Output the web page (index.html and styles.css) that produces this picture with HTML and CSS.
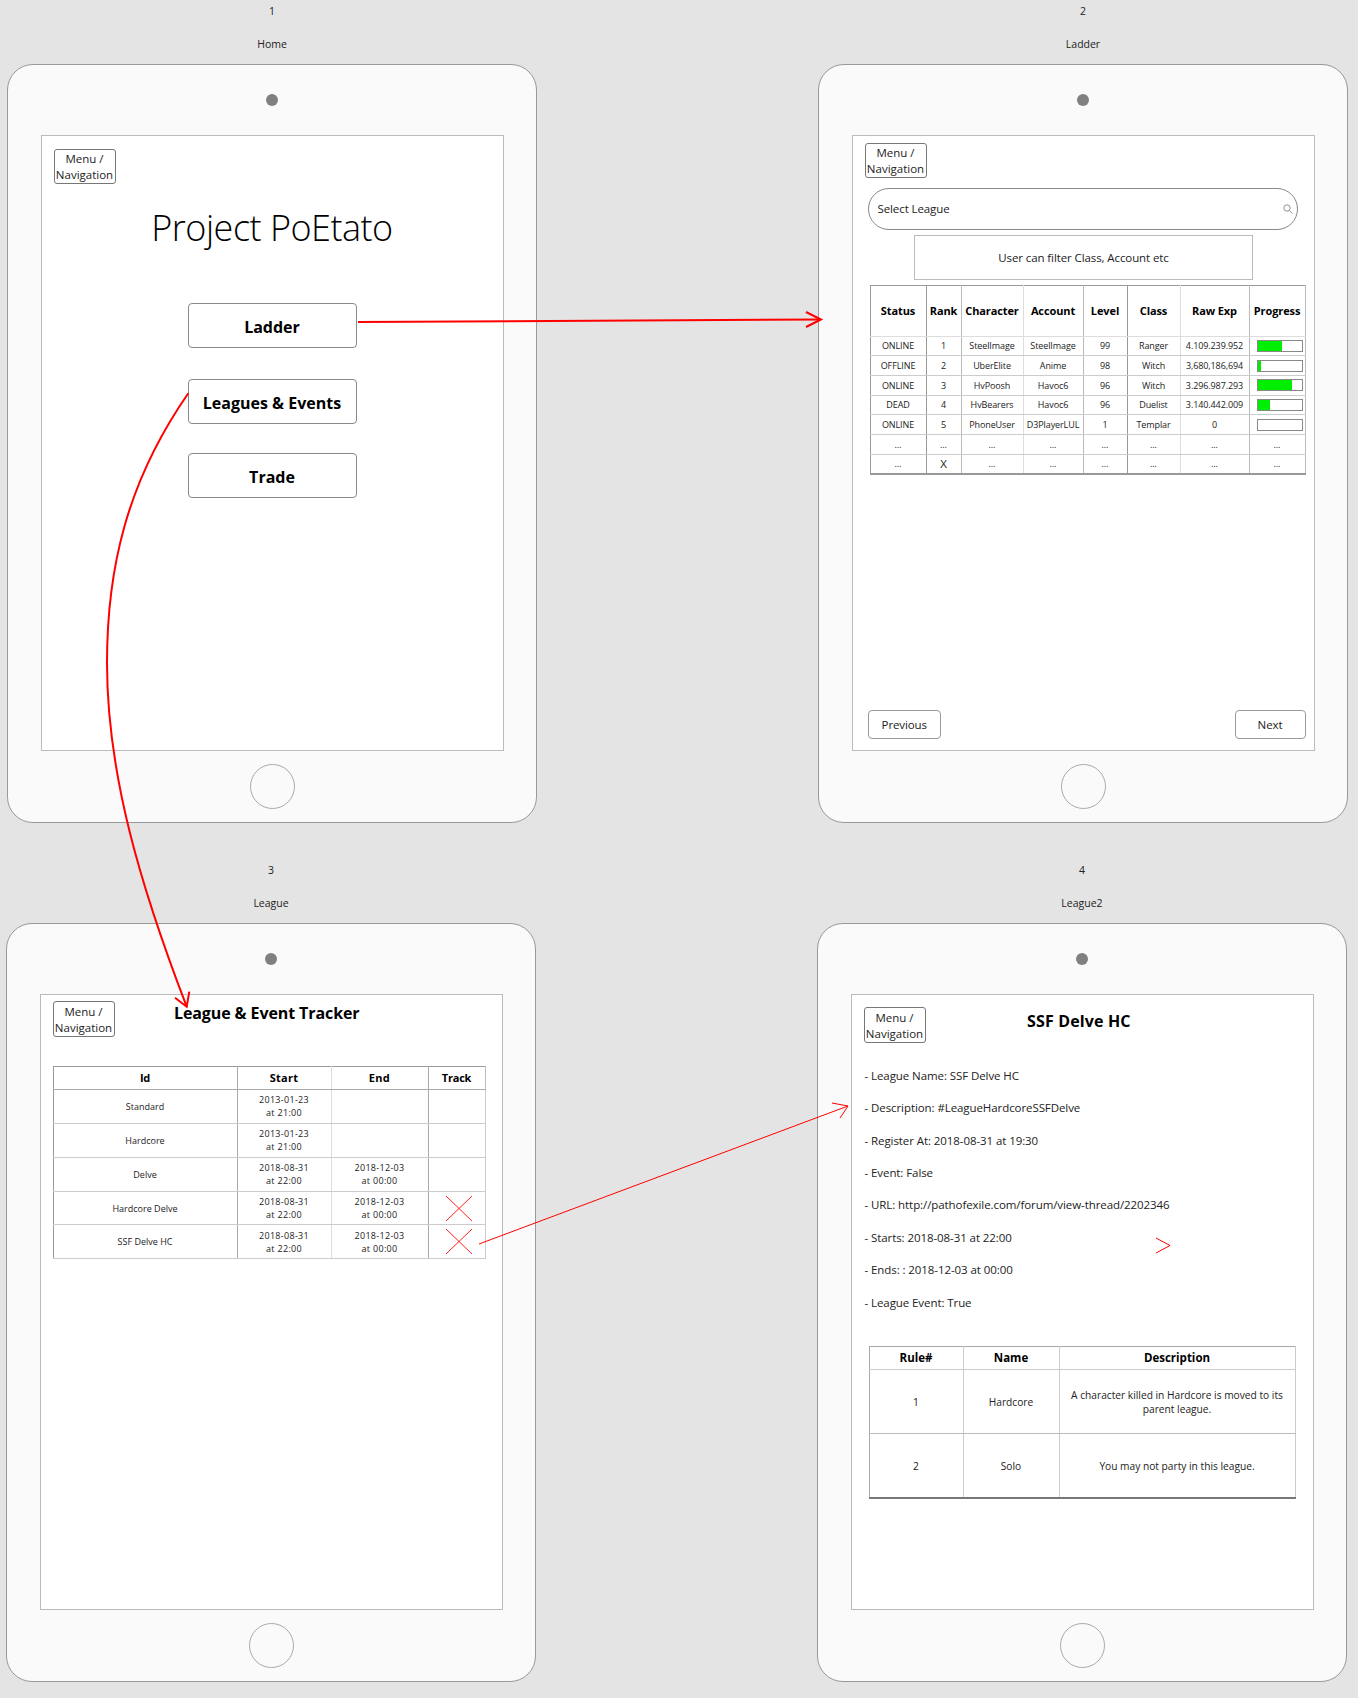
FILE: index.html
```html
<!DOCTYPE html>
<html lang="en">

<head>
    <meta charset="UTF-8">
    <meta name="viewport" content="width=device-width, initial-scale=1.0">
    <title>Project PoEtato wireframes</title>
    <link rel="stylesheet" href="styles.css">
</head>

<body>
    <div class="canvas">

        <!-- 1: Home -->
        <section class="frame frame-home">
            <div class="frame-num">1</div>
            <div class="frame-name">Home</div>
            <div class="device">
                <div class="camera"></div>
                <div class="screen screen-home">
                    <button class="menu-btn">Menu /<br>Navigation</button>
                    <h1 class="app-title">Project PoEtato</h1>
                    <div class="home-nav">
                        <button class="home-btn">Ladder</button>
                        <button class="home-btn">Leagues &amp; Events</button>
                        <button class="home-btn">Trade</button>
                    </div>
                </div>
                <div class="home-key"></div>
            </div>
        </section>

        <!-- 2: Ladder -->
        <section class="frame frame-ladder">
            <div class="frame-num">2</div>
            <div class="frame-name">Ladder</div>
            <div class="device">
                <div class="camera"></div>
                <div class="screen screen-ladder">
                    <button class="menu-btn">Menu /<br>Navigation</button>
                    <div class="search">
                        <span>Select League</span>
                        <svg class="search-icon" width="10" height="10" viewBox="0 0 10 10">
                            <circle cx="4" cy="4" r="3.2"></circle>
                            <path d="M6.4 6.4L9.4 9.6"></path>
                        </svg>
                    </div>
                    <div class="filter-box">User can filter Class, Account etc</div>
                    <table class="ladder-table">
                        <thead>
                            <tr>
                                <th>Status</th>
                                <th>Rank</th>
                                <th>Character</th>
                                <th>Account</th>
                                <th>Level</th>
                                <th>Class</th>
                                <th>Raw Exp</th>
                                <th>Progress</th>
                            </tr>
                        </thead>
                        <tbody>
                            <tr>
                                <td>ONLINE</td>
                                <td>1</td>
                                <td>SteelImage</td>
                                <td>SteelImage</td>
                                <td>99</td>
                                <td>Ranger</td>
                                <td>4.109.239.952</td>
                                <td><div class="bar"><div class="bar-fill" style="width: 55%"></div></div></td>
                            </tr>
                            <tr>
                                <td>OFFLINE</td>
                                <td>2</td>
                                <td>UberElite</td>
                                <td>Anime</td>
                                <td>98</td>
                                <td>Witch</td>
                                <td>3,680,186,694</td>
                                <td><div class="bar"><div class="bar-fill" style="width: 8%"></div></div></td>
                            </tr>
                            <tr>
                                <td>ONLINE</td>
                                <td>3</td>
                                <td>HvPoosh</td>
                                <td>Havoc6</td>
                                <td>96</td>
                                <td>Witch</td>
                                <td>3.296.987.293</td>
                                <td><div class="bar"><div class="bar-fill" style="width: 79%"></div></div></td>
                            </tr>
                            <tr>
                                <td>DEAD</td>
                                <td>4</td>
                                <td>HvBearers</td>
                                <td>Havoc6</td>
                                <td>96</td>
                                <td>Duelist</td>
                                <td>3.140.442.009</td>
                                <td><div class="bar"><div class="bar-fill" style="width: 29%"></div></div></td>
                            </tr>
                            <tr>
                                <td>ONLINE</td>
                                <td>5</td>
                                <td>PhoneUser</td>
                                <td>D3PlayerLUL</td>
                                <td>1</td>
                                <td>Templar</td>
                                <td>0</td>
                                <td><div class="bar"></div></td>
                            </tr>
                            <tr>
                                <td>...</td>
                                <td>...</td>
                                <td>...</td>
                                <td>...</td>
                                <td>...</td>
                                <td>...</td>
                                <td>...</td>
                                <td>...</td>
                            </tr>
                            <tr>
                                <td>...</td>
                                <td class="rank-x">X</td>
                                <td>...</td>
                                <td>...</td>
                                <td>...</td>
                                <td>...</td>
                                <td>...</td>
                                <td>...</td>
                            </tr>
                        </tbody>
                    </table>
                    <div class="pager">
                        <button class="pager-btn">Previous</button>
                        <button class="pager-btn">Next</button>
                    </div>
                </div>
                <div class="home-key"></div>
            </div>
        </section>

        <!-- 3: League -->
        <section class="frame frame-league">
            <div class="frame-num">3</div>
            <div class="frame-name">League</div>
            <div class="device">
                <div class="camera"></div>
                <div class="screen screen-league">
                    <div class="screen-head">
                        <button class="menu-btn">Menu /<br>Navigation</button>
                        <h2 class="screen-title">League &amp; Event Tracker</h2>
                    </div>
                    <table class="league-table">
                        <thead>
                            <tr>
                                <th>Id</th>
                                <th>Start</th>
                                <th>End</th>
                                <th>Track</th>
                            </tr>
                        </thead>
                        <tbody>
                            <tr>
                                <td>Standard</td>
                                <td>2013-01-23<br>at 21:00</td>
                                <td></td>
                                <td></td>
                            </tr>
                            <tr>
                                <td>Hardcore</td>
                                <td>2013-01-23<br>at 21:00</td>
                                <td></td>
                                <td></td>
                            </tr>
                            <tr>
                                <td>Delve</td>
                                <td>2018-08-31<br>at 22:00</td>
                                <td>2018-12-03<br>at 00:00</td>
                                <td></td>
                            </tr>
                            <tr>
                                <td>Hardcore Delve</td>
                                <td>2018-08-31<br>at 22:00</td>
                                <td>2018-12-03<br>at 00:00</td>
                                <td>
                                    <svg class="track-x" width="26" height="25" viewBox="0 0 26 25">
                                        <path d="M0 0L26 25M26 0L0 25"></path>
                                    </svg>
                                </td>
                            </tr>
                            <tr>
                                <td>SSF Delve HC</td>
                                <td>2018-08-31<br>at 22:00</td>
                                <td>2018-12-03<br>at 00:00</td>
                                <td>
                                    <svg class="track-x" width="26" height="25" viewBox="0 0 26 25">
                                        <path d="M0 0L26 25M26 0L0 25"></path>
                                    </svg>
                                </td>
                            </tr>
                        </tbody>
                    </table>
                </div>
                <div class="home-key"></div>
            </div>
        </section>

        <!-- 4: League2 -->
        <section class="frame frame-league2">
            <div class="frame-num">4</div>
            <div class="frame-name">League2</div>
            <div class="device">
                <div class="camera"></div>
                <div class="screen screen-league2">
                    <div class="screen-head">
                        <button class="menu-btn">Menu /<br>Navigation</button>
                        <h2 class="screen-title">SSF Delve HC</h2>
                    </div>
                    <ul class="league-info">
                        <li>- League Name: SSF Delve HC</li>
                        <li>- Description: #LeagueHardcoreSSFDelve</li>
                        <li>- Register At: 2018-08-31 at 19:30</li>
                        <li>- Event: False</li>
                        <li>- URL: http://pathofexile.com/forum/view-thread/2202346</li>
                        <li>- Starts: 2018-08-31 at 22:00</li>
                        <li>- Ends: : 2018-12-03 at 00:00</li>
                        <li>- League Event: True</li>
                    </ul>
                    <table class="rules-table">
                        <thead>
                            <tr>
                                <th>Rule#</th>
                                <th>Name</th>
                                <th>Description</th>
                            </tr>
                        </thead>
                        <tbody>
                            <tr>
                                <td>1</td>
                                <td>Hardcore</td>
                                <td>A character killed in Hardcore is moved to its parent league.</td>
                            </tr>
                            <tr>
                                <td>2</td>
                                <td>Solo</td>
                                <td>You may not party in this league.</td>
                            </tr>
                        </tbody>
                    </table>
                </div>
                <div class="home-key"></div>
            </div>
        </section>

        <!-- Prototype links drawn over the frames -->
        <svg class="links" width="1358" height="1698" viewBox="0 0 1358 1698">
            <path class="link-thick" d="M358 322L821 319.5"></path>
            <path class="link-thick" d="M806 312L821 319.5L806 327"></path>
            <path class="link-thick" d="M188.300 393.300C126 483 107 570 107 663C107 773 140 885 186.700 1006.700"></path>
            <path class="link-thick" d="M175 997.700L186.700 1006.700L189.300 991.700"></path>
            <path class="link-thin" d="M479 1244L848 1106"></path>
            <path class="link-thin" d="M832 1103L848 1106L840 1118"></path>
            <path class="link-thin" d="M1156 1238L1170 1245.500L1156 1253"></path>
        </svg>
    </div>
</body>

</html>
```

FILE: styles.css
```css
/* Wireframe board */
* {
    box-sizing: border-box;
}

body {
    margin: 0;
    background-color: #e4e4e4;
    font-family: "Open Sans", "Liberation Sans", sans-serif;
    color: #222;
}

button {
    font-family: inherit;
    color: inherit;
    background-color: #fff;
    padding: 0;
}

.canvas {
    position: relative;
    width: 1358px;
    height: 1698px;
    overflow: hidden;
}

.links {
    position: absolute;
    left: 0;
    top: 0;
    pointer-events: none;
}

.links path {
    fill: none;
    stroke: #f00;
}

.link-thick {
    stroke-width: 2;
}

.link-thin {
    stroke-width: 1;
}

/* Frames sit at free places on the board */
.frame {
    position: absolute;
    width: 530px;
}

.frame-home {
    left: 7px;
    top: 0;
}

.frame-ladder {
    left: 818px;
    top: 0;
}

.frame-league {
    left: 6px;
    top: 859px;
}

.frame-league2 {
    left: 817px;
    top: 859px;
}

.frame-num,
.frame-name {
    text-align: center;
    font-size: 10.5px;
    height: 14px;
    line-height: 14px;
}

.frame-num {
    margin-top: 4px;
}

.frame-name {
    margin-top: 19px;
    margin-bottom: 13px;
}

.device {
    display: flex;
    flex-direction: column;
    align-items: center;
    height: 759px;
    padding-top: 29px;
    background-color: #fafafa;
    border: 1px solid #999;
    border-radius: 26px;
}

.camera {
    width: 12px;
    height: 12px;
    border-radius: 50%;
    background-color: #808080;
}

.home-key {
    width: 45px;
    height: 45px;
    margin-top: 13px;
    border: 1px solid #aaa;
    border-radius: 50%;
}

.screen {
    width: 463px;
    height: 616px;
    margin-top: 29px;
    background-color: #fff;
    border: 1px solid #bbb;
}

.menu-btn {
    display: block;
    flex-shrink: 0;
    width: 62px;
    height: 35.500px;
    padding-top: 1px;
    border: 1px solid #777;
    border-radius: 3px;
    font-size: 11.5px;
    line-height: 16px;
}

/* Home */
.screen-home {
    padding: 12.500px 0 0 12px;
}

.app-title {
    margin: 18.500px 12px 0 0;
    font-size: 36px;
    font-weight: 300;
    line-height: 50px;
    text-align: center;
    color: #000;
    letter-spacing: -0.5px;
}

.home-nav {
    display: flex;
    flex-direction: column;
    align-items: center;
    gap: 31.500px;
    margin: 50.500px 12px 0 0;
}

.home-btn {
    width: 169px;
    height: 44.500px;
    padding-top: 3px;
    border: 1px solid #888;
    border-radius: 4px;
    font-size: 16px;
    font-weight: 700;
    color: #000;
}

.home-btn:last-child {
    margin-top: -2px;
}

/* Ladder */
.screen-ladder {
    display: flex;
    flex-direction: column;
    padding: 6.500px 7px 11px 12px;
}

.search {
    display: flex;
    align-items: center;
    justify-content: space-between;
    width: 430px;
    height: 42.500px;
    margin: 9.500px 0 0 3.500px;
    padding: 0 4px 0 8.500px;
    border: 1px solid #888;
    border-radius: 21px;
    font-size: 11.500px;
    letter-spacing: -0.1px;
}

.search-icon {
    fill: none;
    stroke: #777;
    stroke-width: 0.8;
}

.filter-box {
    display: flex;
    align-items: center;
    justify-content: center;
    width: 339px;
    height: 45px;
    margin: 5px 0 0 49px;
    padding-left: 1px;
    border: 1px solid #bbb;
    font-size: 11.500px;
    letter-spacing: -0.1px;
}

.ladder-table,
.league-table,
.rules-table {
    border-collapse: collapse;
    table-layout: fixed;
    text-align: center;
}

th {
    color: #000;
    font-weight: 700;
    padding: 0;
}

td {
    padding: 0;
}

.ladder-table {
    width: 436px;
    margin: 4.500px 0 0 5px;
    border: 1px solid #999;
    border-bottom-width: 2px;
    font-size: 9px;
}

.ladder-table th {
    height: 51px;
    font-size: 11px;
    letter-spacing: -0.1px;
    border-bottom: 1px solid #ddd;
    border-right: 1px solid #bbb;
}

.ladder-table td {
    height: 19.700px;
    border-bottom: 1px solid #ccc;
    border-right: 1px solid #bbb;
    white-space: nowrap;
    letter-spacing: -0.1px;
}

.ladder-table th:nth-child(1),
.ladder-table td:nth-child(1) {
    width: 56px;
    border-right-color: #999;
}

.ladder-table th:nth-child(2),
.ladder-table td:nth-child(2) {
    width: 35px;
}

.ladder-table th:nth-child(3),
.ladder-table td:nth-child(3) {
    width: 62px;
    border-right-color: #ddd;
}

.ladder-table th:nth-child(4),
.ladder-table td:nth-child(4) {
    width: 60px;
}

.ladder-table th:nth-child(5),
.ladder-table td:nth-child(5) {
    width: 44px;
    border-right-color: #999;
}

.ladder-table th:nth-child(6),
.ladder-table td:nth-child(6) {
    width: 53px;
    border-right-color: #ddd;
}

.ladder-table th:nth-child(7),
.ladder-table td:nth-child(7) {
    width: 69px;
}

.ladder-table td.rank-x {
    font-size: 11.500px;
}

.bar {
    width: 46px;
    height: 12px;
    margin-left: 7px;
    background-color: #fff;
    border: 1px solid #888;
}

.bar-fill {
    height: 100%;
    background-color: #00ee00;
}

.pager {
    display: flex;
    justify-content: space-between;
    margin-top: auto;
    padding: 0 1px 0 3.500px;
}

.pager-btn {
    width: 72.500px;
    height: 29.500px;
    border: 1px solid #999;
    border-radius: 4px;
    font-size: 11.500px;
    letter-spacing: -0.1px;
}

.pager-btn:last-child {
    width: 71px;
}

/* League list */
.screen-head {
    display: flex;
    align-items: flex-start;
}

.screen-title {
    margin: 0;
    font-size: 16px;
    font-weight: 700;
    color: #000;
    white-space: nowrap;
}

.screen-league {
    padding: 6.400px 0 0 12px;
}

.screen-league .screen-title {
    margin: 1px 0 0 59.500px;
    letter-spacing: -0.1px;
}

.league-table {
    width: 433px;
    margin-top: 29px;
    border: 1px solid #999;
    font-size: 9px;
    line-height: 13px;
}

.league-table th {
    height: 23px;
    font-size: 11px;
    letter-spacing: -0.2px;
    border-bottom: 1px solid #aaa;
    border-right: 1px solid #bbb;
}

.league-table td {
    height: 33.900px;
    border-bottom: 1px solid #ccc;
    border-right: 1px solid #ccc;
    vertical-align: middle;
}

.league-table th:nth-child(1),
.league-table td:nth-child(1) {
    width: 184px;
    border-right-color: #aaa;
}

.league-table th:nth-child(2),
.league-table td:nth-child(2) {
    width: 94px;
    border-right-color: #ddd;
    letter-spacing: 0.3px;
}

.league-table th:nth-child(3),
.league-table td:nth-child(3) {
    width: 97px;
    border-right-color: #aaa;
    letter-spacing: 0.3px;
}

.track-x {
    display: block;
    margin-left: 17px;
    fill: none;
    stroke: #f22;
    stroke-width: 1;
}

/* League detail */
.screen-league2 {
    padding: 12.400px 0 0 12px;
}

.screen-league2 .screen-title {
    margin: 3px 0 0 101.500px;
    letter-spacing: 0.15px;
}

.league-info {
    list-style: none;
    margin: 0;
    padding: 17px 0 0 1px;
    font-size: 11.500px;
    letter-spacing: -0.08px;
}

.league-info li {
    height: 32.400px;
    line-height: 32.400px;
}

.rules-table {
    width: 427px;
    margin: 27px 0 0 5px;
    border: 1px solid #aaa;
    border-bottom: 2px solid #777;
    font-size: 10.200px;
    line-height: 14.500px;
}

.rules-table th {
    height: 23px;
    padding-top: 1px;
    font-size: 11.500px;
    border-bottom: 1px solid #ccc;
    border-right: 1px solid #ccc;
}

.rules-table td {
    height: 64px;
    padding: 1px 8px 0;
    border-bottom: 1px solid #bbb;
    border-right: 1px solid #ccc;
}

.rules-table th:nth-child(1),
.rules-table td:nth-child(1) {
    width: 94px;
}

.rules-table th:nth-child(2),
.rules-table td:nth-child(2) {
    width: 96px;
}
```
